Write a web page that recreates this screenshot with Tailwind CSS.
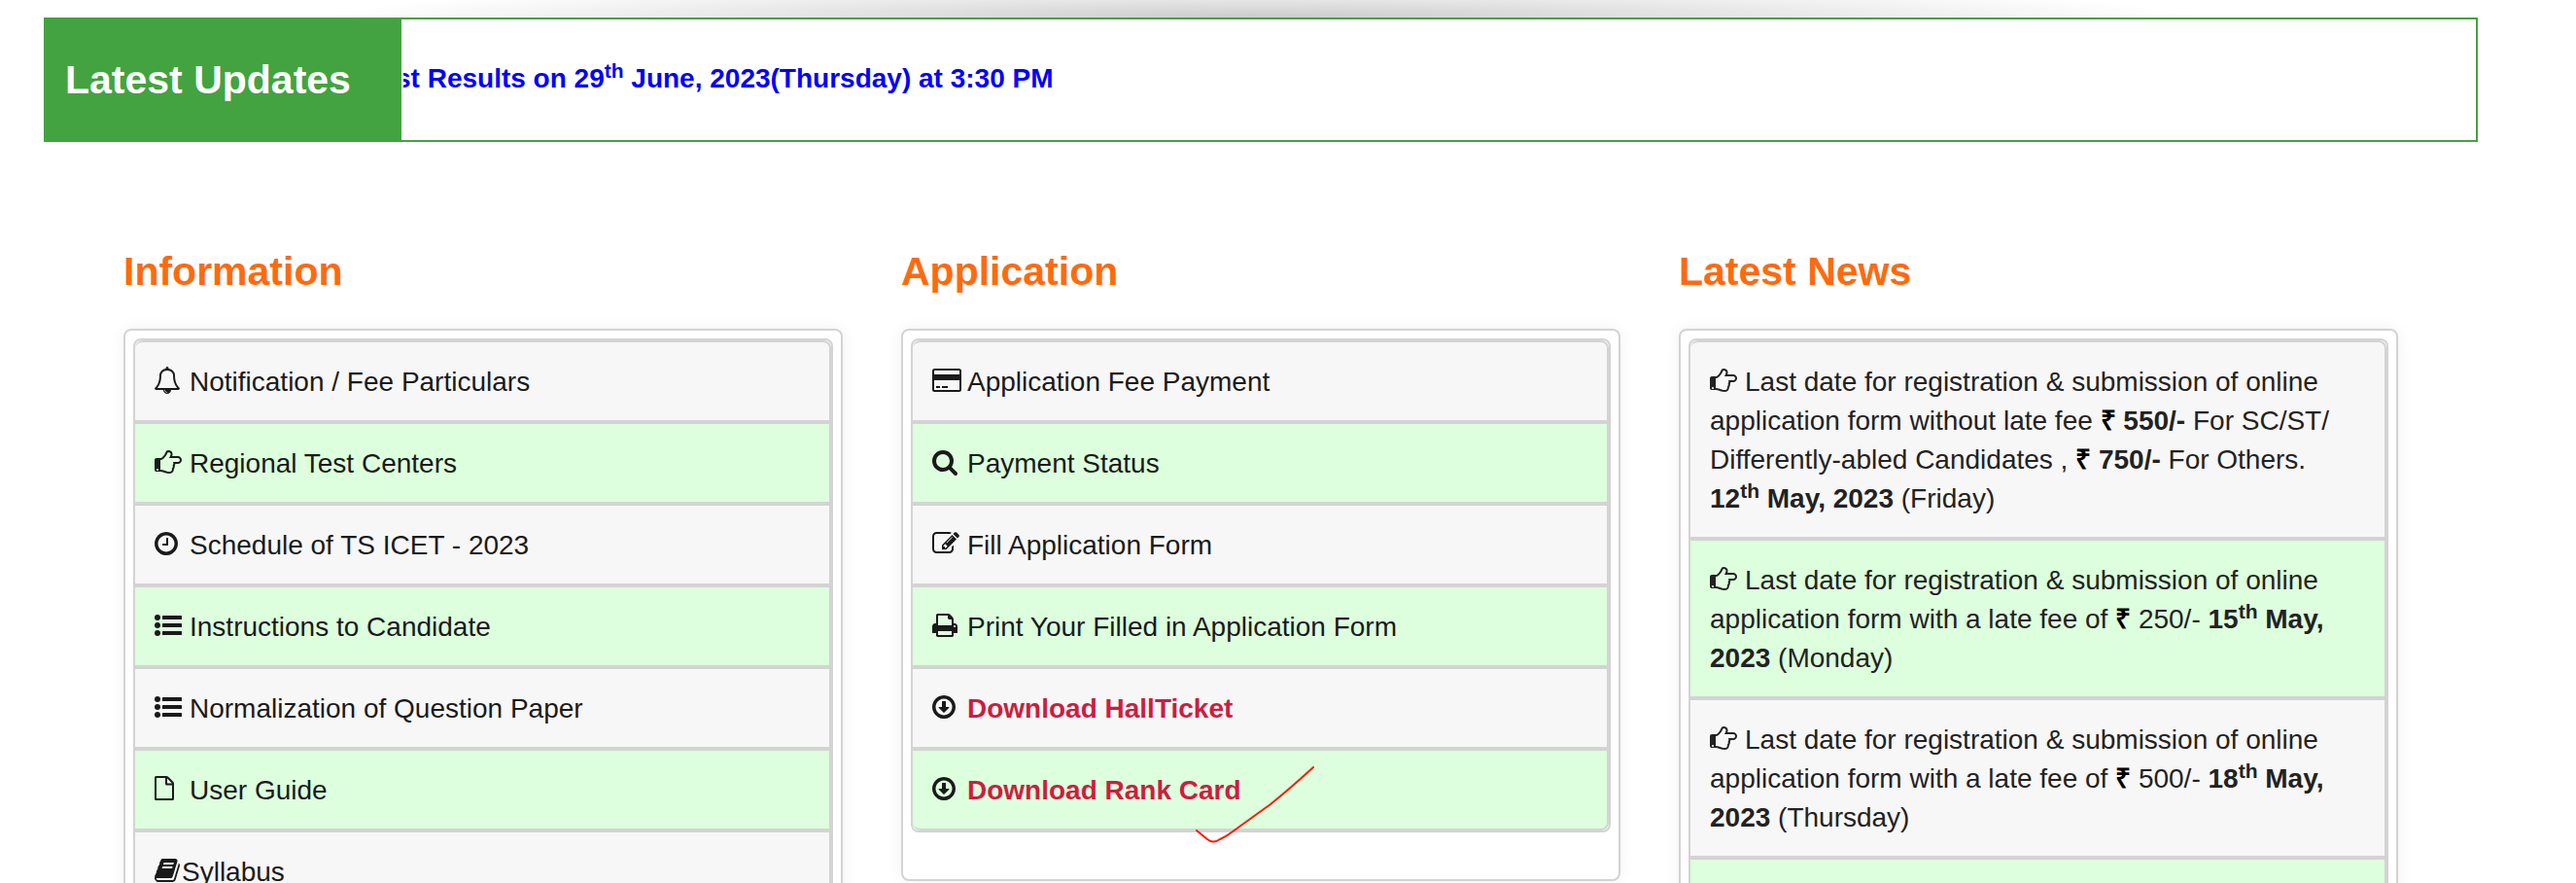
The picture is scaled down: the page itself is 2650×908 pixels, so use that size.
<!DOCTYPE html>
<html lang="en">
  <head>
    <meta charset="UTF-8" />
    <meta name="viewport" content="width=device-width, initial-scale=1.0" />
    <title>TS ICET - 2023</title>
    <script src="https://cdn.jsdelivr.net/npm/@tailwindcss/browser@4"></script>
  </head>
  <body
    class="h-screen overflow-hidden bg-white pr-14 font-['Liberation_Sans',Arial,sans-serif] text-[28px] leading-10 text-[#222222]"
  >
    <!-- icon sprite -->
    <svg class="hidden" aria-hidden="true">
      <symbol id="bell" viewBox="64 0 2304 1792">
        <path
          d="M912 1696q0-16-16-16-59 0-101.5-42.5t-42.5-101.5q0-16-16-16t-16 16q0 73 51.5 124.5t124.5 51.5q16 0 16-16zm-666-288h1300q-266-300-266-832 0-51-24-105t-69-103-121.5-80.5-169.5-31.5-169.5 31.5-121.5 80.5-69 103-24 105q0 532-266 832zm1482 0q0 52-38 90t-90 38h-448q0 106-75 181t-181 75-181-75-75-181h-448q-52 0-90-38t-38-90q50-42 91-88t85-119.5 74.5-158.5 50-206 19.5-260q0-152 117-282.5t307-158.5q-8-19-8-39 0-40 28-68t68-28 68 28 28 68q0 20-8 39 190 28 307 158.5t117 282.5q0 139 19.5 260t50 206 74.5 158.5 85 119.5 91 88z"
        />
      </symbol>
      <symbol id="hand" viewBox="0 0 2304 1792">
        <path
          d="M256 1408q0-26-19-45t-45-19-45 19-19 45 19 45 45 19 45-19 19-45zm1408-640q0-51-39-89.5t-89-38.5h-576q0-20 15-48.5t33-55 33-68 15-84.5q0-67-44.5-97.5t-115.5-30.5q-24 0-90 139-24 44-37 65-40 64-112 145-71 81-101 106-69 57-140 57h-32v640h32q72 0 167 32t193.5 64 179.5 32q189 0 189-167 0-26-5-56 30-16 47.5-52.5t17.5-73.5-18-69q53-50 53-119 0-25-10-55.5t-25-47.5h331q52 0 90-38t38-90zm128-1q0 105-75.5 181t-180.5 76h-169q-4 62-37 119 3 21 3 43 0 101-60 178 1 139-85 219.5t-227 80.5q-133 0-322-69-164-59-223-59h-288q-53 0-90.5-37.5t-37.5-90.5v-640q0-53 37.5-90.5t90.5-37.5h288q10 0 21.5-4.5t23.5-14 22.5-18 24-22.5 20.5-21.5 19-21.5 14-17q65-74 100-129 13-21 33-62t37-72 40.5-63 55-49.5 69.5-17.5q125 0 206.5 67t81.5 189q0 68-22 128h374q104 0 180 76t76 179z"
        />
      </symbol>
      <symbol id="clock" viewBox="128 0 2304 1792">
        <path
          d="M1024 544v448q0 14-9 23t-23 9h-320q-14 0-23-9t-9-23v-64q0-14 9-23t23-9h224v-352q0-14 9-23t23-9h64q14 0 23 9t9 23zm416 352q0-148-73-273t-198-198-273-73-273 73-198 198-73 273 73 273 198 198 273 73 273-73 198-198 73-273zm224 0q0 209-103 385.5t-279.5 279.5-385.5 103-385.5-103-279.5-279.5-103-385.5 103-385.5 279.5-279.5 385.5-103 385.5 103 279.5 279.5 103 385.5z"
        />
      </symbol>
      <symbol id="list" viewBox="0 0 2304 1792">
        <circle cx="192" cy="384" r="192" />
        <circle cx="192" cy="896" r="192" />
        <circle cx="192" cy="1408" r="192" />
        <rect x="512" y="256" width="1280" height="256" rx="32" />
        <rect x="512" y="768" width="1280" height="256" rx="32" />
        <rect x="512" y="1280" width="1280" height="256" rx="32" />
      </symbol>
      <symbol id="file" viewBox="0 0 36 28">
        <path
          d="M1.5 2h10.7q.6 0 1.3.6l4.9 4.9q.6.7.6 1.400v15.600q0 .5-.5.5H1.500q-.5 0-.5-.5v-22q0-.5.5-.5zM12 2v7q0 .5.5.5H19"
          fill="none"
          stroke="currentColor"
          stroke-width="2"
        />
      </symbol>
      <symbol id="book" viewBox="64 0 1792 1792">
        <path
          d="M1703 478q40 57 18 129l-275 906q-19 64-76.5 107.5t-122.5 43.5h-923q-77 0-148.5-53.5t-99.5-131.5q-24-67-2-127 0-4 3-27t4-37q1-8-3-21.5t-3-19.5q2-11 8-21t16.5-23.5 16.5-23.5q23-38 45-91.5t30-91.5q3-10 .5-30t-.5-28q3-11 17-28t17-23q21-36 42-92t25-90q1-9-2.5-32t.5-28q4-13 22-30.5t22-22.5q19-26 42.5-84.5t27.5-96.5q1-8-3-25.5t-2-26.5q2-8 9-18t18-23 17-21q8-12 16.5-30.5t15-35 16-36 19.5-32 26.5-23.5 36-11.5 47.5 5.5l-1 3q38-9 51-9h761q74 0 114 56t18 130l-274 906q-36 119-71.5 153.5t-128.5 34.5h-869q-27 0-38 15-11 16-1 43 24 70 144 70h923q29 0 56-15.5t35-41.5l300-987q7-22 5-57 38 15 59 43zm-1064 2q-4 13 2 22.5t20 9.5h608q13 0 25.5-9.5t16.5-22.5l21-64q4-13-2-22.5t-20-9.5h-608q-13 0-25.5 9.5t-16.5 22.5zm-83 256q-4 13 2 22.5t20 9.5h608q13 0 25.5-9.5t16.5-22.5l21-64q4-13-2-22.5t-20-9.5h-608q-13 0-25.5 9.5t-16.5 22.5z"
        />
      </symbol>
      <symbol id="card" viewBox="0 0 36 28">
        <rect
          x="1"
          y="3"
          width="28"
          height="22"
          rx="1.5"
          fill="none"
          stroke="currentColor"
          stroke-width="2"
        />
        <path d="M1 8h28v6H1zM4 20h4v2H4zM10 20h6v2h-6z" />
      </symbol>
      <symbol id="search" viewBox="64 0 2304 1792">
        <path
          d="M1216 832q0-185-131.5-316.5t-316.5-131.5-316.5 131.5-131.5 316.5 131.5 316.5 316.5 131.5 316.5-131.5 131.5-316.5zm512 832q0 52-38 90t-90 38q-54 0-90-38l-343-342q-179 124-399 124-143 0-273.5-55.5t-225-150-150-225-55.5-273.5 55.5-273.5 150-225 225-150 273.5-55.5 273.5 55.5 225 150 150 225 55.5 273.5q0 220-124 399l343 343q37 37 37 90z"
        />
      </symbol>
      <symbol id="edit" viewBox="0 0 2304 1792">
        <path
          d="M888 1184l116-116-152-152-116 116v56h96v96h56zm440-720q-16-16-33 1l-350 350q-17 17-1 33t33-1l350-350q17-17 1-33zm80 594v190q0 119-84.5 203.5t-203.5 84.5h-832q-119 0-203.5-84.5t-84.5-203.5v-832q0-119 84.5-203.5t203.5-84.5h832q63 0 117 25 15 7 18 23 3 17-9 29l-49 49q-14 14-32 8-23-6-45-6h-832q-66 0-113 47t-47 113v832q0 66 47 113t113 47h832q66 0 113-47t47-113v-126q0-13 9-22l64-64q15-15 35-7t20 29zm-96-738l288 288-672 672h-288v-288zm444 132l-92 92-288-288 92-92q28-28 68-28t68 28l152 152q28 28 28 68t-28 68z"
        />
      </symbol>
      <symbol id="print" viewBox="64 0 2304 1792">
        <path
          d="M448 1536h896v-256h-896v256zm0-640h896v-384h-160q-40 0-68-28t-28-68v-160h-640v640zm1152 64q0-26-19-45t-45-19-45 19-19 45 19 45 45 19 45-19 19-45zm128 0v416q0 13-9.5 22.5t-22.5 9.5h-224v160q0 40-28 68t-68 28h-960q-40 0-68-28t-28-68v-160h-224q-13 0-22.5-9.5t-9.5-22.5v-416q0-79 56.5-135.5t135.5-56.5h64v-544q0-40 28-68t68-28h672q40 0 88 20t76 48l152 152q28 28 48 76t20 88v256h64q79 0 135.5 56.5t56.5 135.5z"
        />
      </symbol>
      <symbol id="down" viewBox="128 0 2304 1792">
        <path
          d="M800 512h192q14 0 23 9t9 23v352h192q22 0 30 20 8 19-7 35l-320 320q-10 9-23 9t-23-9l-320-320q-15-16-7-35 8-20 30-20h192v-352q0-14 9-23t23-9zM1440 896q0-148-73-273t-198-198-273-73-273 73-198 198-73 273 73 273 198 198 273 73 273-73 198-198 73-273zm224 0q0 209-103 385.5t-279.5 279.5-385.5 103-385.5-103-279.5-279.5-103-385.5 103-385.5 279.5-279.5 385.5-103 385.5 103 279.5 279.5 103 385.5z"
        />
      </symbol>
    </svg>

    <div
      class="h-[18px] bg-[radial-gradient(ellipse_960px_36px_at_50%_100%,#cccccc,#ffffff)]"
    ></div>

    <!-- ticker -->
    <div class="mx-[45px] flex h-32 border-2 border-[#43a340]">
      <div
        class="flex w-[366px] shrink-0 items-center bg-[#43a340] pl-5 text-[41px] font-bold text-white"
      >
        Latest Updates
      </div>
      <div class="ml-0.5 flex flex-1 items-start overflow-hidden pt-[41px]">
        <p class="-ml-2 font-bold whitespace-nowrap text-[#0000ff]">
          st Results on 29<sup>th</sup> June, 2023(Thursday) at 3:30 PM
        </p>
      </div>
    </div>

    <main class="mt-[109px] grid grid-cols-3 items-start gap-x-15 px-[127px]">
      <section>
        <h2 class="mb-[35px] text-[41px] leading-12 font-bold text-[#ff6a0e]">
          Information
        </h2>
        <div
          class="rounded-lg border-2 border-[#d3d3d3] p-2 pb-12 shadow-[0_0_16px_rgba(0,0,0,0.06)]"
        >
          <ul
            class="rounded-lg border-2 border-[#d3d3d3] text-[#1a1a1a] *:border-y-2 *:border-r-2 *:border-[#d3d3d3] *:px-5 *:pt-[21px] *:pb-[19px] *:odd:bg-[#f7f7f7] *:even:bg-[#ddffdd] *:first:rounded-t-lg *:last:rounded-b-lg"
          >
            <li><a href="#"><svg class="inline-block h-7 w-9 fill-current align-[-3px]"><use href="#bell" /></svg>Notification / Fee Particulars</a></li>
            <li><a href="#"><svg class="inline-block h-7 w-9 fill-current align-[-3px]"><use href="#hand" /></svg>Regional Test Centers</a></li>
            <li><a href="#"><svg class="inline-block h-7 w-9 fill-current align-[-3px]"><use href="#clock" /></svg>Schedule of TS ICET - 2023</a></li>
            <li><a href="#"><svg class="inline-block h-7 w-9 fill-current align-[-3px]"><use href="#list" /></svg>Instructions to Candidate</a></li>
            <li><a href="#"><svg class="inline-block h-7 w-9 fill-current align-[-3px]"><use href="#list" /></svg>Normalization of Question Paper</a></li>
            <li><a href="#"><svg class="inline-block h-7 w-9 fill-current align-[-3px]"><use href="#file" /></svg>User Guide</a></li>
            <li><a href="#"><svg class="inline-block h-7 w-7 fill-current align-[-3px]"><use href="#book" /></svg>Syllabus</a></li>
          </ul>
        </div>
      </section>

      <section>
        <h2 class="mb-[35px] text-[41px] leading-12 font-bold text-[#ff6a0e]">
          Application
        </h2>
        <div
          class="rounded-lg border-2 border-[#d3d3d3] p-2 pb-12 shadow-[0_0_16px_rgba(0,0,0,0.06)]"
        >
          <ul
            class="rounded-lg border-2 border-[#d3d3d3] text-[#1a1a1a] *:border-y-2 *:border-r-2 *:border-[#d3d3d3] *:px-5 *:pt-[21px] *:pb-[19px] *:odd:bg-[#f7f7f7] *:even:bg-[#ddffdd] *:first:rounded-t-lg *:last:rounded-b-lg"
          >
            <li><a href="#"><svg class="inline-block h-7 w-9 fill-current align-[-3px]"><use href="#card" /></svg>Application Fee Payment</a></li>
            <li><a href="#"><svg class="inline-block h-7 w-9 fill-current align-[-3px]"><use href="#search" /></svg>Payment Status</a></li>
            <li><a href="#"><svg class="inline-block h-7 w-9 fill-current align-[-3px]"><use href="#edit" /></svg>Fill Application Form</a></li>
            <li><a href="#"><svg class="inline-block h-7 w-9 fill-current align-[-3px]"><use href="#print" /></svg>Print Your Filled in Application Form</a></li>
            <li><a href="#"><svg class="inline-block h-7 w-9 fill-current align-[-3px]"><use href="#down" /></svg><b class="text-[#cd1d40]">Download HallTicket</b></a></li>
            <li class="relative">
              <a href="#"><svg class="inline-block h-7 w-9 fill-current align-[-3px]"><use href="#down" /></svg><b class="text-[#cd1d40]">Download Rank Card</b></a>
              <!-- hand-drawn tick over the row -->
              <svg
                class="absolute top-4 left-[290px] h-20 w-[124px]"
                viewBox="0 0 124 80"
                fill="none"
                stroke="#ff1a00"
                stroke-width="2"
                stroke-linecap="round"
              >
                <path d="M2 66L13 75q6 5 13 0Q33 72 44 63.5L78 39Q98 23 122 1" />
              </svg>
            </li>
          </ul>
        </div>
      </section>

      <section>
        <h2 class="mb-[35px] text-[41px] leading-12 font-bold text-[#ff6a0e]">
          Latest News
        </h2>
        <div
          class="rounded-lg border-2 border-[#d3d3d3] p-2 pb-12 shadow-[0_0_16px_rgba(0,0,0,0.06)]"
        >
          <ul
            class="rounded-lg border-2 border-[#d3d3d3] *:border-y-2 *:border-r-2 *:border-[#d3d3d3] *:px-5 *:pt-[21px] *:pb-[19px] *:odd:bg-[#f7f7f7] *:even:bg-[#ddffdd] *:first:rounded-t-lg *:last:rounded-b-lg"
          >
            <li>
              <svg class="inline-block h-7 w-9 fill-current align-[-3px]"><use href="#hand" /></svg>Last date for registration &amp; submission of online
              application form without late fee
              <b><span class="text-black">₹</span> 550/-</b> For SC/ST/<wbr />
              Differently-abled Candidates ,
              <b><span class="text-black">₹</span> 750/-</b> For Others.<br />
              <b>12<sup>th</sup> May, 2023</b> (Friday)
            </li>
            <li>
              <svg class="inline-block h-7 w-9 fill-current align-[-3px]"><use href="#hand" /></svg>Last date for registration &amp; submission of online
              application form with a late fee of
              <b class="text-black">₹</b> 250/- <b>15<sup>th</sup> May, 2023</b>
              (Monday)
            </li>
            <li>
              <svg class="inline-block h-7 w-9 fill-current align-[-3px]"><use href="#hand" /></svg>Last date for registration &amp; submission of online
              application form with a late fee of
              <b class="text-black">₹</b> 500/- <b>18<sup>th</sup> May, 2023</b>
              (Thursday)
            </li>
            <li class="h-32"></li>
          </ul>
        </div>
      </section>
    </main>
  </body>
</html>
